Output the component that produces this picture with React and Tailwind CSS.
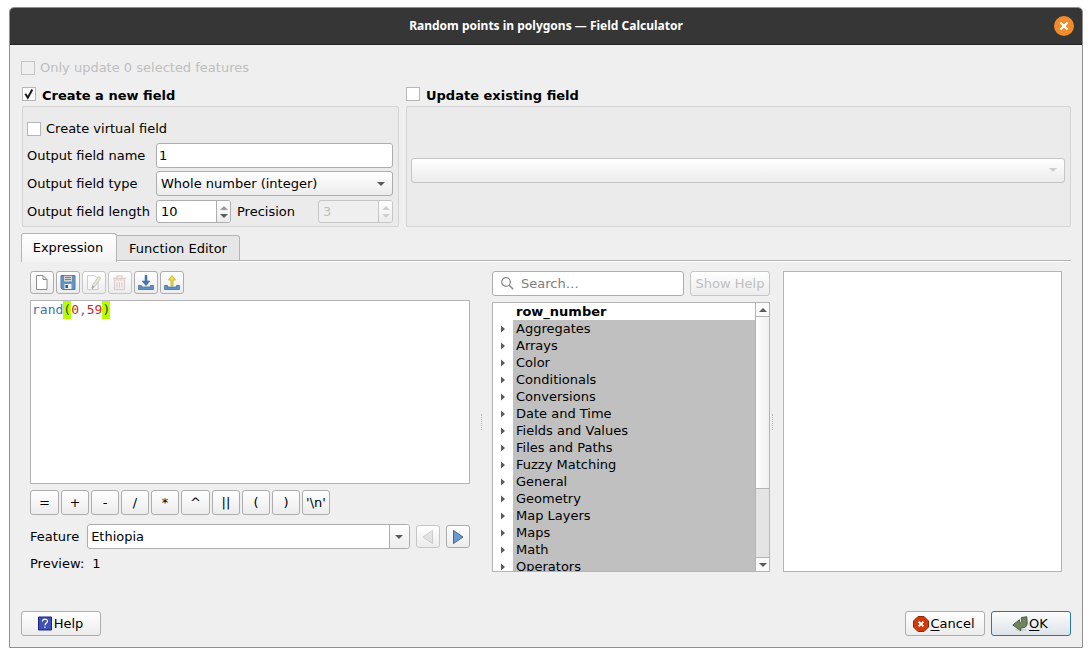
import React, { useState } from "react";

const cn = (...parts) => parts.filter(Boolean).join(" ");

const RAISED =
  "rounded-[3px] border border-[#adadad] bg-linear-to-b from-white to-[#ececec] disabled:border-[#c6c6c6] disabled:text-[#bebebe]";

function Arrow({ dir = "down", className = "size-2 text-[#5a5a5a]" }) {
  const d = {
    down: "M0 2h8L4 6z",
    up: "M0 6h8L4 2z",
    right: "M2 .5v7l4-3.500z",
  }[dir];
  return (
    <svg viewBox="0 0 8 8" className={cn("shrink-0", className)} fill="currentColor" aria-hidden="true">
      <path d={d} />
    </svg>
  );
}

function CheckBox({ id, defaultChecked, disabled }) {
  return (
    <span className="grid size-3.5 shrink-0">
      <input
        id={id}
        type="checkbox"
        defaultChecked={defaultChecked}
        disabled={disabled}
        className="peer col-start-1 row-start-1 size-3.5 appearance-none border border-[#b6b6b6] bg-white disabled:border-[#c4c4c4] disabled:bg-[#efefef]"
      />
      <svg
        viewBox="0 0 14 14"
        className="pointer-events-none invisible col-start-1 row-start-1 size-3.5 peer-checked:visible"
        fill="none"
        stroke="#1c1c1c"
        strokeWidth="2"
        aria-hidden="true"
      >
        <path d="M3.300 6.800 5.800 10.800 10.300 2.500" />
      </svg>
    </span>
  );
}

function Combo({ id, options, disabled, label }) {
  return (
    <span className="grid min-w-0 grow items-center">
      <select
        id={id}
        disabled={disabled}
        aria-label={label}
        className={cn(RAISED, "col-start-1 row-start-1 h-[25px] w-full appearance-none pr-6 pl-1")}
      >
        {options.map((o) => (
          <option key={o}>{o}</option>
        ))}
      </select>
      <Arrow
        className={cn(
          "pointer-events-none col-start-1 row-start-1 mr-2 size-2 justify-self-end",
          disabled ? "text-[#cfcfcf]" : "text-[#5a5a5a]"
        )}
      />
    </span>
  );
}

function SpinBox({ id, value, disabled }) {
  return (
    <span
      className={cn(
        "flex h-[23px] w-[75px] shrink-0 overflow-hidden rounded-[3px] border",
        disabled ? "border-[#c6c6c6] bg-[#efefef]" : "border-[#adadad] bg-white"
      )}
    >
      <input
        id={id}
        defaultValue={value}
        disabled={disabled}
        inputMode="numeric"
        className="w-0 min-w-0 grow bg-transparent pl-1 outline-none disabled:text-[#bebebe]"
      />
      <span
        className={cn(
          "flex w-3.5 flex-col items-center justify-center border-l bg-linear-to-b from-white to-[#ececec]",
          disabled ? "border-[#c6c6c6]" : "border-[#adadad]"
        )}
      >
        <button type="button" disabled={disabled} aria-label="Increase">
          <Arrow dir="up" className={cn("size-2", disabled ? "text-[#cfcfcf]" : "text-[#9a9a9a]")} />
        </button>
        <button type="button" disabled={disabled} aria-label="Decrease">
          <Arrow className={cn("size-2", disabled ? "text-[#cfcfcf]" : "text-[#5a5a5a]")} />
        </button>
      </span>
    </span>
  );
}

function Group({ id, title, defaultChecked, children }) {
  return (
    <section className="flex min-w-0 flex-col">
      <div className="flex h-[21px] items-start gap-1.5 pt-0.5">
        <CheckBox id={id} defaultChecked={defaultChecked} />
        <label htmlFor={id} className="leading-[17px] font-bold">
          {title}
        </label>
      </div>
      <div className="flex grow flex-col rounded-[2px] border border-[#d4d4d4] bg-[#ebebeb] pt-[13px] pr-[5px] pb-0.5 pl-1">
        {children}
      </div>
    </section>
  );
}

function ToolButton({ label, disabled, children }) {
  return (
    <button
      type="button"
      aria-label={label}
      disabled={disabled}
      className={cn(RAISED, "flex h-[23px] w-6 shrink-0 items-center justify-center")}
    >
      <svg viewBox="0 0 16 16" className={cn("size-4", disabled && "opacity-40")} fill="none" aria-hidden="true">
        {children}
      </svg>
    </button>
  );
}

function Tray() {
  return <path d="M.5 10.500h3v1.500h9v-1.500h3v4H.5z" fill="#5f8fc4" stroke="#4a6f9b" strokeWidth=".8" />;
}

function Toolbar() {
  return (
    <div className="flex gap-0.5">
      <ToolButton label="New file">
        <path d="M2.500.5h6.500l4 4v10H2.500z" fill="#fff" stroke="#8c8c8c" />
        <path d="M9 .5v4h4" stroke="#8c8c8c" />
      </ToolButton>
      <ToolButton label="Save">
        <path d="M1 .5h14v14H2.500L1 13z" fill="#6695cb" stroke="#52799f" />
        <path d="M3.500.5h9v6.500h-9z" fill="#d3d3d0" stroke="#52799f" strokeWidth=".7" />
        <path d="M5 2.500h6M5 4.500h6" stroke="#7d7d7d" />
        <path d="M4.500 9h7v5h-7z" fill="#eceeef" />
        <path d="M5.500 10h2.500v3H5.500z" fill="#2f5688" />
      </ToolButton>
      <ToolButton label="Edit" disabled>
        <path d="M1.500.5h7l3.500 3v11H1.500z" fill="#fff" stroke="#999" />
        <path d="m6 13.500.600-3.500L12.500 1.500l2.300 1.600L9 11.500z" fill="#c9c9a8" stroke="#777" strokeWidth=".8" />
        <path d="M6 13.500 7.500 11" stroke="#444" strokeWidth="1.500" />
      </ToolButton>
      <ToolButton label="Delete" disabled>
        <path d="M2.500 5h10v9.500h-10z" fill="#f6eaea" stroke="#b98d8d" />
        <path d="M1 3.500h13M5 3V1h5v2" stroke="#b98d8d" strokeWidth="1.300" />
        <path d="M5 7v5.500M7.500 7v5.500M10 7v5.500" stroke="#b98d8d" />
      </ToolButton>
      <ToolButton label="Import">
        <Tray />
        <path d="M7 .3h2v5.700h3L8 10.700 4 6h3z" fill="#4577ad" stroke="#3f6798" strokeWidth=".5" />
      </ToolButton>
      <ToolButton label="Export">
        <Tray />
        <path d="M7 10.700h2V5h2.500L8 .5 4.500 5H7z" fill="#efe03a" stroke="#bdb02a" strokeWidth=".8" />
      </ToolButton>
    </div>
  );
}

const TOKEN_COLORS = {
  name: "text-[#4271ae]",
  paren: "bg-[#b7ff00] text-[#3c4a10]",
  number: "text-[#c82829]",
  comma: "text-[#8959a8]",
};

function tokenize(source) {
  return (source.match(/[a-z_]+|\d+|[()]|,|\s+|./gi) || []).map((text) => {
    if (/^[a-z_]/i.test(text)) return { text, kind: "name" };
    if (/^\d/.test(text)) return { text, kind: "number" };
    if (/^[()]$/.test(text)) return { text, kind: "paren" };
    return { text, kind: "comma" };
  });
}

function ExpressionEditor() {
  const [code, setCode] = useState("rand(0,59)");
  const type = "font-['DejaVu_Sans_Mono',monospace] text-[13px] leading-[18px] whitespace-pre-wrap pl-px";
  return (
    <div className="grid min-h-[184px] grow border border-[#b4b4b4] bg-white">
      <pre aria-hidden="true" className={cn(type, "col-start-1 row-start-1")}>
        {tokenize(code).map((t, i) => (
          <span key={i} className={cn("inline-block", TOKEN_COLORS[t.kind])}>
            {t.text}
          </span>
        ))}
      </pre>
      <textarea
        aria-label="Expression"
        spellCheck={false}
        value={code}
        onChange={(e) => setCode(e.target.value)}
        className={cn(type, "col-start-1 row-start-1 resize-none bg-transparent text-transparent caret-black outline-none")}
      />
    </div>
  );
}

const OPERATORS = [
  ["=", true],
  ["+"],
  ["-"],
  ["/"],
  ["*"],
  ["^", true],
  ["||"],
  ["("],
  [")"],
  ["'\\n'"],
];

const FUNCTION_GROUPS = [
  "Aggregates",
  "Arrays",
  "Color",
  "Conditionals",
  "Conversions",
  "Date and Time",
  "Fields and Values",
  "Files and Paths",
  "Fuzzy Matching",
  "General",
  "Geometry",
  "Map Layers",
  "Maps",
  "Math",
  "Operators",
];

function FunctionTree() {
  return (
    <div className="flex min-h-[270px] grow basis-0 overflow-hidden border border-[#b4b4b4] bg-white">
      <ul className="h-0 min-w-0 grow leading-[17px]">
        <li className="pl-[23px] font-bold">row_number</li>
        {FUNCTION_GROUPS.map((name) => (
          <li key={name} className="flex items-center">
            <span className="flex w-5 shrink-0 justify-center">
              <Arrow dir="right" />
            </span>
            <span className="grow bg-[#c0c0c0] pl-[3px]">{name}</span>
          </li>
        ))}
      </ul>
      <div className="flex w-3.5 shrink-0 flex-col border-l border-[#b4b4b4] bg-[#e4e4e4]">
        <button
          type="button"
          aria-label="Scroll up"
          className="flex h-3.5 shrink-0 items-center justify-center border-b border-[#b4b4b4] bg-[#fafafa]"
        >
          <Arrow dir="up" />
        </button>
        <div className="grow-[172] border-b border-[#b4b4b4] bg-linear-to-r from-white to-[#efefef]" />
        <div className="grow-[68]" />
        <button
          type="button"
          aria-label="Scroll down"
          className="flex h-3.5 shrink-0 items-center justify-center border-t border-[#b4b4b4] bg-[#fafafa]"
        >
          <Arrow />
        </button>
      </div>
    </div>
  );
}

function SplitHandle({ className }) {
  return (
    <div className={cn("flex items-center", className)} aria-hidden="true">
      <div className="h-4 border-l border-dotted border-[#b4b4b4]" />
    </div>
  );
}

function ExpressionPane() {
  return (
    <div className="grid grow grid-cols-[440fr_22px_278fr_13px_279fr] px-[9px] pt-[9px]">
      <div className="flex min-w-0 flex-col">
        <Toolbar />
        <div className="mt-1.5 flex grow flex-col">
          <ExpressionEditor />
        </div>
        <div className="mt-1.5 flex gap-0.5">
          {OPERATORS.map(([text, wide]) => (
            <button
              key={text}
              type="button"
              className={cn(RAISED, "h-[25px] text-center", wide ? "w-[29px]" : "w-7")}
            >
              {text}
            </button>
          ))}
        </div>
        <div className="mt-[9px] flex items-center gap-1.5">
          <label htmlFor="feature" className="pr-0.5">
            Feature
          </label>
          <span className="flex h-[25px] min-w-0 grow overflow-hidden rounded-[3px] border border-[#adadad] bg-white">
            <input
              id="feature"
              defaultValue="Ethiopia"
              className="w-0 min-w-0 grow bg-transparent pl-[3px] outline-none"
            />
            <button
              type="button"
              aria-label="Show features"
              className="flex w-5 items-center justify-center border-l border-[#adadad] bg-linear-to-b from-white to-[#ececec] pr-px"
            >
              <Arrow />
            </button>
          </span>
          <ToolButton label="Previous feature" disabled>
            <path d="M12.500 1.500v13L3 8z" fill="#c4c8cc" stroke="#8d9196" />
          </ToolButton>
          <ToolButton label="Next feature">
            <path d="M3.500 1.500v13L13 8z" fill="#6a9bd0" stroke="#3f6798" />
          </ToolButton>
        </div>
        <p className="mt-1.5 flex gap-2 leading-[17px]">
          <span>Preview:</span>
          <output>1</output>
        </p>
      </div>

      <SplitHandle className="justify-center" />

      <div className="flex min-w-0 flex-col gap-1.5">
        <div className="flex gap-1.5">
          <label className="flex h-[25px] min-w-0 grow items-center gap-1.5 rounded-[3px] border border-[#adadad] bg-white pl-2">
            <svg viewBox="0 0 14 14" className="size-3.5 shrink-0" fill="none" stroke="#8b8b8b" strokeWidth="1.200" aria-hidden="true">
              <circle cx="5" cy="5" r="4.300" />
              <path d="m8.200 8.200 4 4" strokeWidth="1.600" />
            </svg>
            <input
              type="text"
              aria-label="Search"
              placeholder="Search…"
              className="w-0 min-w-0 grow bg-transparent outline-none placeholder:text-[#7d7d7d]"
            />
          </label>
          <button type="button" disabled className={cn(RAISED, "h-[25px] w-20 shrink-0 whitespace-nowrap")}>
            Show Help
          </button>
        </div>
        <FunctionTree />
      </div>

      <SplitHandle className="pl-0.5" />

      <div className="border border-[#b4b4b4] bg-white" />
    </div>
  );
}

function DialogButton({ icon, accent, children }) {
  return (
    <button
      type="button"
      className={cn(
        "flex h-[25px] w-20 items-center justify-center rounded-[3px] border bg-linear-to-b pr-0.5",
        accent ? "border-[#2a76a4] from-[#fbfcfd] to-[#dde4ea]" : "border-[#adadad] from-white to-[#ececec]"
      )}
    >
      {icon}
      <span>{children}</span>
    </button>
  );
}

const HelpIcon = (
  <svg viewBox="0 0 16 16" className="mr-px size-4" fill="none" aria-hidden="true">
    <path d="M1.500 1h13v13h-13z" fill="#3f51b5" stroke="#1a237e" />
    <path d="M5.500 5.500c0-3.200 5-3 5-.300 0 1.800-2.500 1.900-2.500 4M8 10.500V12" stroke="#fff" strokeWidth="1.200" />
  </svg>
);

const CancelIcon = (
  <svg viewBox="0 0 16 16" className="mr-px size-4" fill="none" aria-hidden="true">
    <path d="M5 .5h6L15.500 5v6L11 15.500H5L.5 11V5z" fill="#d13a08" stroke="#8a2806" />
    <path d="m5.600 5.600 4.800 4.800m0-4.800-4.800 4.800" stroke="#fff" strokeWidth="2" />
  </svg>
);

const OkIcon = (
  <svg viewBox="0 0 16 16" className="mr-px size-4" fill="none" aria-hidden="true">
    <ellipse cx="9" cy="14" rx="6" ry="1.300" fill="#d0d5d8" />
    <path
      d="M9.300 1.600 14.800.700l.4 6.300c0 3-1.700 4.800-4.700 4.800H8.800v3L.8 9l6.700-5.300.3 3h.9c.8 0 .9-.5.9-1.500z"
      fill="#6f8560"
      stroke="#44533b"
      strokeWidth=".9"
    />
  </svg>
);

export default function App() {
  return (
    <main className="flex min-h-screen flex-col bg-white px-[9px] pt-[7px] pb-[9px] font-['DejaVu_Sans',sans-serif] text-[13px] leading-5 text-black">
      <div className="flex grow flex-col rounded-t-[5px] border border-[#8f8f8f] bg-[#efefef]">
        <header className="grid h-[37px] grid-cols-[40px_1fr_40px] items-center rounded-t-[4px] border-b border-[#222] bg-[#363636] pr-2">
          <h1 className="col-start-2 pl-2 text-center font-['Noto_Sans',sans-serif] text-xs font-bold text-white">
            Random points in polygons — Field Calculator
          </h1>
          <button
            type="button"
            aria-label="Close"
            className="flex size-5 items-center justify-center justify-self-end rounded-full bg-[#f28c2b]"
          >
            <svg viewBox="0 0 10 10" className="size-2.5" stroke="#fff" strokeWidth="2.200" aria-hidden="true">
              <path d="m1.500 1.500 7 7m0-7-7 7" />
            </svg>
          </button>
        </header>

        <div className="flex grow flex-col px-[11px] pt-[13px] pb-[11px]">
          <div className="flex h-5 items-center gap-[5px] text-[#bebebe]">
            <CheckBox id="only-selected" disabled />
            <label htmlFor="only-selected">Only update 0 selected features</label>
          </div>

          <div className="mt-[7px] grid grid-cols-[377fr_665fr] gap-[7px] pl-px">
            <Group id="create-field" title="Create a new field" defaultChecked>
              <div className="mb-[5px] flex h-[18px] items-center gap-[5px]">
                <CheckBox id="virtual" />
                <label htmlFor="virtual">Create virtual field</label>
              </div>
              <div className="grid grid-cols-[129px_1fr] items-center gap-y-[3px] whitespace-nowrap">
                <label htmlFor="field-name">Output field name</label>
                <input
                  id="field-name"
                  defaultValue="1"
                  className="h-[25px] w-full min-w-0 rounded-[3px] border border-[#adadad] bg-white pl-0.5 outline-none"
                />
                <label htmlFor="field-type">Output field type</label>
                <Combo id="field-type" options={["Whole number (integer)"]} />
                <label htmlFor="field-length">Output field length</label>
                <div className="flex h-[25px] items-center gap-1.5">
                  <SpinBox id="field-length" value="10" />
                  <label htmlFor="precision" className="grow">
                    Precision
                  </label>
                  <SpinBox id="precision" value="3" disabled />
                </div>
              </div>
            </Group>
            <Group id="update-field" title="Update existing field">
              <div className="flex grow items-center pb-1">
                <Combo label="Existing field" options={[""]} disabled />
              </div>
            </Group>
          </div>

          <div role="tablist" className="mt-1.5 flex items-end shadow-[inset_0_-1px_0_#fff,inset_0_-2px_0_#b4b4b4]">
            <button
              type="button"
              role="tab"
              aria-selected="true"
              className="h-[29px] w-24 rounded-t-[3px] border border-b-0 border-[#b4b4b4] bg-linear-to-b from-white to-[#f3f3f3] pr-0.5"
            >
              Expression
            </button>
            <button
              type="button"
              role="tab"
              aria-selected="false"
              className="mb-px h-[26px] w-[123px] rounded-tr-[3px] border border-l-0 border-[#b4b4b4] bg-[#e6e6e6] pt-0.5"
            >
              Function Editor
            </button>
          </div>

          <ExpressionPane />

          <footer className="mt-[39px] flex gap-1.5">
            <DialogButton icon={HelpIcon}>Help</DialogButton>
            <div className="grow" />
            <DialogButton icon={CancelIcon}>
              <u className="underline-offset-2">C</u>ancel
            </DialogButton>
            <DialogButton icon={OkIcon} accent>
              <u className="underline-offset-2">O</u>K
            </DialogButton>
          </footer>
        </div>
      </div>
    </main>
  );
}
